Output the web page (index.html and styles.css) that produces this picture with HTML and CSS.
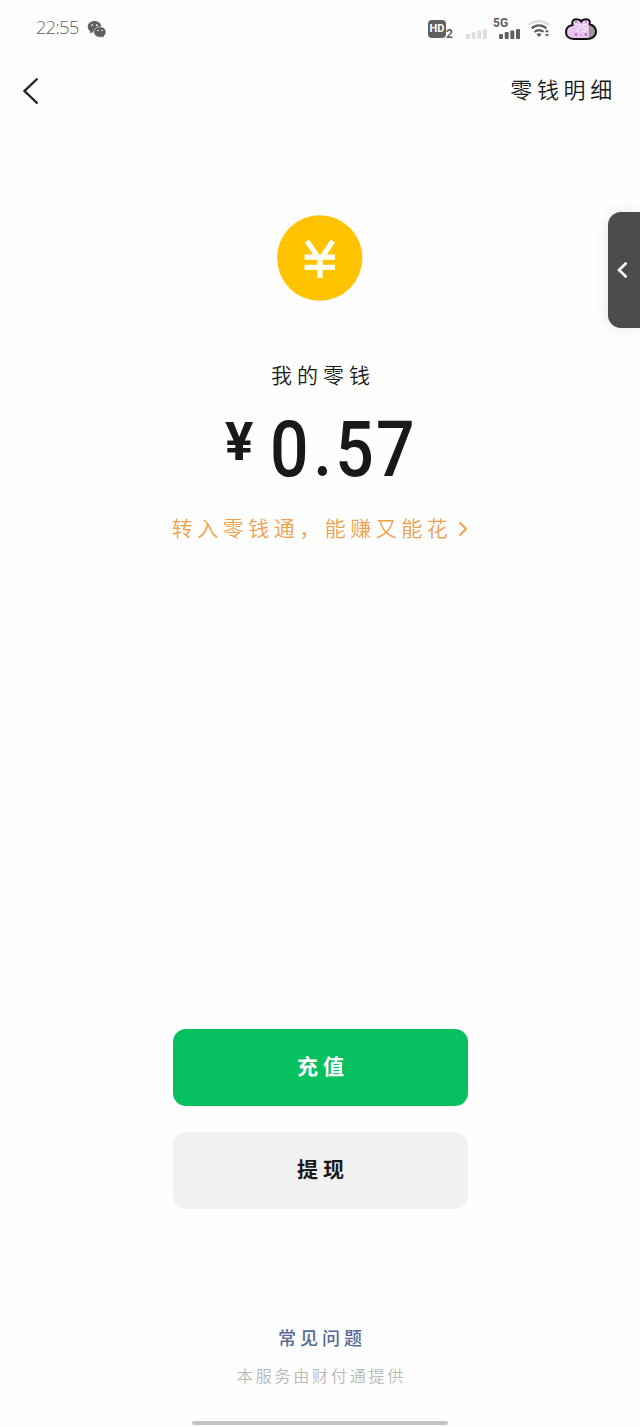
FILE: index.html
```
<!DOCTYPE html>
<html lang="zh-CN">
<head>
    <meta charset="UTF-8">
    <meta name="viewport" content="width=device-width, initial-scale=1.0">
    <title>我的零钱</title>
    <link rel="stylesheet" href="styles.css">
</head>
<body>
    <div class="screen">
        <div class="status-bar">
            <span class="time">22:55</span>
            <svg class="wechat" width="20" height="20" viewBox="0 0 20 20">
                <path d="M7.500 1C3.600 1 .7 3.500.7 6.700c0 1.900 1 3.500 2.500 4.500L2.700 13.400l2.400-1.200c.8.200 1.600.3 2.400.3 3.900 0 6.800-2.600 6.800-5.800S11.400 1 7.500 1z" fill="#606060"/>
                <path d="M13 6.800c-3.500 0-6.200 2.200-6.200 5.200s2.700 5.300 6.200 5.300c.7 0 1.400-.1 2-.3l2.200 1.200-.4-2c1.400-1 2.200-2.500 2.200-4.200 0-3-2.600-5.200-6-5.200z" fill="#606060" stroke="#fff" stroke-width=".6"/>
                <g fill="#fff">
                    <circle cx="5.200" cy="5.200" r=".9"/>
                    <circle cx="9.800" cy="5.200" r=".9"/>
                    <circle cx="10.900" cy="10.500" r=".8"/>
                    <circle cx="15" cy="10.500" r=".8"/>
                </g>
            </svg>
            <div class="status-icons">
                <span class="hd"><b>HD</b><i>2</i></span>
                <svg class="signal-off" width="22" height="12" viewBox="0 0 22 12" fill="#dedede">
                    <rect x="0" y="6" width="4" height="5" rx="1"/>
                    <rect x="5.700" y="4" width="4" height="7" rx="1"/>
                    <rect x="11.300" y="2.500" width="4" height="8.500" rx="1"/>
                    <rect x="17" y="1" width="4" height="10" rx="1"/>
                </svg>
                <span class="mobile">
                    <b>5G</b>
                    <svg width="22" height="12" viewBox="0 0 22 12" fill="#606060">
                        <rect x="0" y="6" width="4" height="5" rx="1"/>
                        <rect x="5.700" y="4" width="4" height="7" rx="1"/>
                        <rect x="11.300" y="2.500" width="4" height="8.500" rx="1"/>
                        <rect x="17" y="1" width="4" height="10" rx="1"/>
                    </svg>
                </span>
                <svg class="wifi" width="24" height="20" viewBox="0 0 24 20" fill="none" stroke-width="2.300">
                    <path d="M.8 6C7 .8 15 .8 21.200 6" stroke="#dcdcdc"/>
                    <path d="M3.600 9.400C8 5.400 14 5.400 18.400 9.400" stroke="#606060"/>
                    <path d="M6.500 13c2.500-2.500 6.500-2.500 9 0" stroke="#606060"/>
                    <path d="M8.400 15.300q2.600-2 5.200 0L11 18z" fill="#606060"/>
                    <path d="M16.900 13.200l2.100-2.700 2.100 2.700zM16.900 15l2.100 2.700L21.100 15z" fill="#606060"/>
                </svg>
                <svg class="battery" width="34" height="24" viewBox="0 0 34 24">
                    <defs>
                        <clipPath id="bunny"><path d="M8.500 8C7.500 3 10 2 13 2.200c2.500.1 3.500 1 4.200 2.300C18 3 19.300 2.200 22 2.200c3 0 4.500 1.500 3.700 5C30 8.500 32 11 32 14.800c0 4.500-4 7.200-9 7.200H10.500C5.500 22 2 19.500 2 15.200 2 11.500 4.500 8.700 8.500 8z"/></clipPath>
                    </defs>
                    <g clip-path="url(#bunny)">
                        <rect width="25" height="24" fill="#e8c6ef"/>
                        <rect x="25" width="9" height="24" fill="#999"/>
                    </g>
                    <path d="M8.500 8C7.500 3 10 2 13 2.200c2.500.1 3.500 1 4.200 2.300C18 3 19.300 2.200 22 2.200c3 0 4.500 1.500 3.700 5C30 8.500 32 11 32 14.800c0 4.500-4 7.200-9 7.200H10.500C5.500 22 2 19.500 2 15.200 2 11.500 4.500 8.700 8.500 8z" fill="none" stroke="#111" stroke-width="2"/>
                    <g fill="#b277ba">
                        <circle cx="12" cy="4.800" r="1"/>
                        <circle cx="22" cy="4.800" r="1"/>
                        <circle cx="12" cy="17.500" r="1.400"/>
                        <circle cx="22" cy="17.500" r="1.400"/>
                        <circle cx="17" cy="18.300" r=".7"/>
                    </g>
                    <text class="level" x="11" y="14.500">75</text>
                </svg>
            </div>
        </div>

        <div class="nav">
            <svg class="back" width="18" height="28" viewBox="0 0 18 28">
                <path d="M15.500 1.500L2.500 14l13 12.500" fill="none" stroke="#222" stroke-width="2.400"/>
            </svg>
            <a class="detail">零钱明细</a>
        </div>

        <div class="balance">
            <svg class="coin" width="86" height="86" viewBox="0 0 86 86">
                <circle cx="42.700" cy="43" r="42.700" fill="#ffc300"/>
                <path d="M30 26L43 45 56 26M43 43v20M27.500 42.200h30.500M27.500 52.300h30.500" fill="none" stroke="#fffef4" stroke-width="5.200"/>
            </svg>
            <div class="label">我的零钱</div>
            <div class="amount">
                <span class="yen">¥</span>
                <span class="digits">0<span class="dot">.</span>57</span>
            </div>
            <a class="promo">转入零钱通，能赚又能花
                <svg width="10" height="16" viewBox="0 0 10 16">
                    <path d="M1.500 1.500L8 8l-6.500 6.500" fill="none" stroke="#eea04b" stroke-width="2"/>
                </svg>
            </a>
        </div>

        <div class="actions">
            <button class="btn recharge">充值</button>
            <button class="btn withdraw">提现</button>
        </div>

        <div class="footer">
            <a class="faq">常见问题</a>
            <div class="provider">本服务由财付通提供</div>
            <div class="home-bar"></div>
        </div>

        <div class="side-tab">
            <svg width="12" height="18" viewBox="0 0 12 18">
                <path d="M10.500 1.800L3 9l7.500 7.200" fill="none" stroke="#fff" stroke-width="2.600"/>
            </svg>
        </div>
    </div>
</body>
</html>
```
FILE: styles.css
```
* {
    box-sizing: border-box;
}

body {
    margin: 0;
    background: #fefefe;
    color: #191919;
    font-family: "Noto Sans CJK SC", sans-serif;
}

.screen {
    position: relative;
    display: flex;
    flex-direction: column;
    width: 640px;
    height: 1427px;
    overflow: hidden;
}

.status-bar {
    display: flex;
    align-items: center;
    height: 58px;
    padding: 0 42px 0 36px;
    color: #606060;
}

.time {
    width: 51px;
    padding-bottom: 4px;
    font-family: "Open Sans", sans-serif;
    font-size: 18px;
    font-weight: 300;
    letter-spacing: -0.5px;
}

.wechat {
    margin-top: 2px;
}

.status-icons {
    display: flex;
    align-items: center;
    margin-left: auto;
}

.hd {
    display: flex;
    align-items: flex-end;
    height: 19px;
    font-family: Roboto, sans-serif;
}

.hd b {
    width: 18px;
    height: 18px;
    margin-bottom: 1px;
    border-radius: 4px;
    background: #606060;
    color: #fff;
    font-size: 11px;
    line-height: 18px;
    text-align: center;
}

.hd i {
    width: 8px;
    font-size: 12px;
    font-style: normal;
    font-weight: 700;
    line-height: 10px;
}

.signal-off {
    margin: 9px 0 0 12px;
}

.mobile {
    display: flex;
    flex-direction: column;
    width: 29px;
    height: 22px;
    margin-left: 5px;
    font-family: Roboto, sans-serif;
}

.mobile b {
    font-size: 12px;
    line-height: 11px;
}

.mobile svg {
    margin: -1px 0 0 6px;
}

.wifi {
    margin-left: 6px;
}

.battery {
    margin-left: 12px;
}

.level {
    fill: #fff;
    fill-opacity: 0.7;
    font: italic 11px Roboto, sans-serif;
}

.nav {
    display: flex;
    align-items: center;
    justify-content: space-between;
    height: 66px;
    padding: 0 23px 0 22px;
}

.detail {
    font-size: 22px;
    font-weight: 350;
    letter-spacing: 4.700px;
    line-height: 30px;
    padding-bottom: 6px;
}

.balance {
    display: flex;
    flex-direction: column;
    align-items: center;
    padding-top: 91px;
}

.label {
    margin-top: 58px;
    padding-left: 6px;
    font-size: 21px;
    font-weight: 350;
    letter-spacing: 5px;
    line-height: 30px;
}

.amount {
    display: flex;
    width: 190px;
    height: 92px;
    margin-top: 15px;
    font-family: Roboto, sans-serif;
    font-weight: 500;
    line-height: 92px;
}

.yen {
    flex: none;
    width: 45px;
    font-size: 53px;
    font-weight: 700;
    line-height: 76px;
}

/* condensed figures */
.digits {
    flex: none;
    font-size: 78px;
    letter-spacing: 2.500px;
    transform: scaleX(0.87);
    transform-origin: left;
}

.dot {
    margin: 0 1px 0 3px;
}

.promo {
    display: flex;
    align-items: center;
    gap: 6px;
    margin-top: 16px;
    color: #eea04b;
    font-size: 21px;
    font-weight: 350;
    letter-spacing: 4.500px;
    line-height: 30px;
}

.promo svg {
    margin-top: 4px;
}

.actions {
    display: flex;
    flex-direction: column;
    align-items: center;
    gap: 26px;
    margin-top: auto;
}

.btn {
    width: 295px;
    height: 77px;
    padding: 0 0 6px 6px;
    border: none;
    border-radius: 13px;
    font-family: inherit;
    font-size: 21px;
    font-weight: 700;
    letter-spacing: 5px;
}

.recharge {
    background: #07c160;
    color: #fff;
}

.withdraw {
    background: #f1f1f1;
    color: #191919;
}

.footer {
    display: flex;
    flex-direction: column;
    align-items: center;
    height: 218px;
    padding-top: 114px;
}

.faq {
    padding-left: 4px;
    color: #576b95;
    font-size: 18px;
    font-weight: 500;
    letter-spacing: 4px;
    line-height: 28px;
}

.provider {
    margin-top: 12px;
    padding-left: 3px;
    color: #b8b8b8;
    font-size: 16px;
    font-weight: 350;
    letter-spacing: 2.800px;
    line-height: 24px;
}

.home-bar {
    width: 256px;
    height: 4px;
    margin-top: 34px;
    border-radius: 2px;
    background: #c3c3c3;
}

/* floating handle on the screen edge */
.side-tab {
    position: absolute;
    top: 212px;
    right: 0;
    display: flex;
    align-items: center;
    width: 32px;
    height: 116px;
    padding-left: 8px;
    border-radius: 13px 0 0 13px;
    background: #4c4c4c;
    box-shadow: 0 0 14px rgba(0, 0, 0, 0.1);
}
```
